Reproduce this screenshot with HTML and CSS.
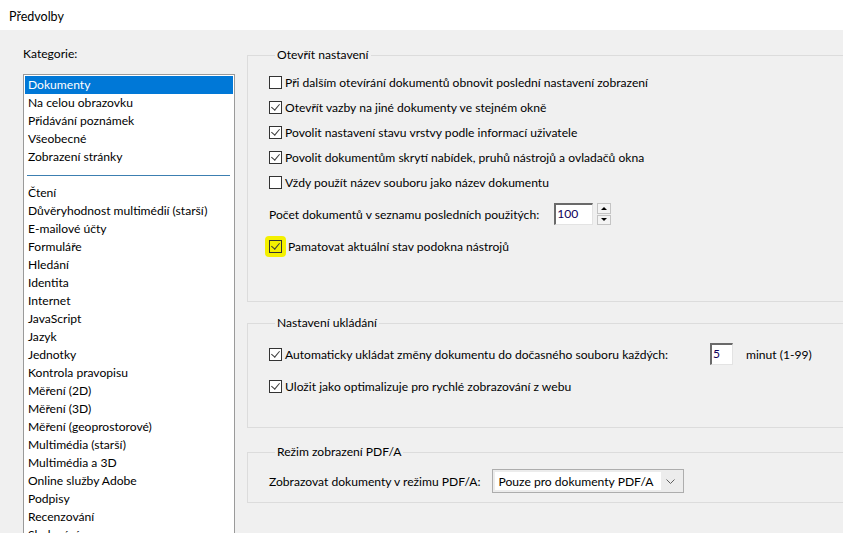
FILE: index.html
```html
<!DOCTYPE html>
<html lang="cs">
<head>
    <meta charset="UTF-8">
    <title>Předvolby</title>
    <link rel="stylesheet" href="styles.css">
</head>
<body>
    <div class="titlebar">Předvolby</div>

    <div class="dialog">
        <div class="sidebar">
            <div class="sidebar-label">Kategorie:</div>
            <ul class="listbox">
                <li class="selected">Dokumenty</li>
                <li>Na celou obrazovku</li>
                <li>Přidávání poznámek</li>
                <li>Všeobecné</li>
                <li>Zobrazení stránky</li>
                <li class="separator"></li>
                <li>Čtení</li>
                <li>Důvěryhodnost multimédií (starší)</li>
                <li>E-mailové účty</li>
                <li>Formuláře</li>
                <li>Hledání</li>
                <li>Identita</li>
                <li>Internet</li>
                <li>JavaScript</li>
                <li>Jazyk</li>
                <li>Jednotky</li>
                <li>Kontrola pravopisu</li>
                <li>Měření (2D)</li>
                <li>Měření (3D)</li>
                <li>Měření (geoprostorové)</li>
                <li>Multimédia (starší)</li>
                <li>Multimédia a 3D</li>
                <li>Online služby Adobe</li>
                <li>Podpisy</li>
                <li>Recenzování</li>
                <li>Sledování</li>
            </ul>
        </div>

        <div class="panel">
            <fieldset class="group group-open">
                <legend>Otevřít nastavení</legend>
                <div class="check-row"><span class="cb"></span><span class="cb-text">Při dalším otevírání dokumentů obnovit poslední nastavení zobrazení</span></div>
                <div class="check-row"><span class="cb checked"></span><span class="cb-text">Otevřít vazby na jiné dokumenty ve stejném okně</span></div>
                <div class="check-row"><span class="cb checked"></span><span class="cb-text">Povolit nastavení stavu vrstvy podle informací uživatele</span></div>
                <div class="check-row"><span class="cb checked"></span><span class="cb-text">Povolit dokumentům skrytí nabídek, pruhů nástrojů a ovladačů okna</span></div>
                <div class="check-row"><span class="cb"></span><span class="cb-text">Vždy použít název souboru jako název dokumentu</span></div>

                <div class="field-row recent-row">
                    <span class="field-label">Počet dokumentů v seznamu posledních použitých:</span>
                    <span class="textbox recent-box">100</span>
                    <span class="spin">
                        <span class="spin-btn"><span class="arrow-up"></span></span>
                        <span class="spin-btn"><span class="arrow-down"></span></span>
                    </span>
                </div>

                <div class="check-row highlight-row">
                    <span class="highlight"><span class="cb checked"></span></span>
                    <span class="cb-text">Pamatovat aktuální stav podokna nástrojů</span>
                </div>
            </fieldset>

            <fieldset class="group group-save">
                <legend>Nastavení ukládání</legend>
                <div class="check-row save-row">
                    <span class="cb checked"></span>
                    <span class="cb-text autosave-text">Automaticky ukládat změny dokumentu do dočasného souboru každých:</span>
                    <span class="textbox minutes-box">5</span>
                    <span class="unit">minut (1-99)</span>
                </div>
                <div class="check-row save-row">
                    <span class="cb checked"></span>
                    <span class="cb-text">Uložit jako optimalizuje pro rychlé zobrazování z webu</span>
                </div>
            </fieldset>

            <fieldset class="group group-pdfa">
                <legend>Režim zobrazení PDF/A</legend>
                <div class="field-row">
                    <span class="field-label">Zobrazovat dokumenty v režimu PDF/A:</span>
                    <span class="combo">
                        <span class="combo-value">Pouze pro dokumenty PDF/A</span>
                        <span class="combo-arrow">
                            <svg width="9" height="5" viewBox="0 0 9 5"><path d="M0.5 0.5 L4.5 4.5 L8.5 0.5" fill="none" stroke="#606060" stroke-width="1"/></svg>
                        </span>
                    </span>
                </div>
            </fieldset>
        </div>
    </div>
</body>
</html>
```

FILE: styles.css
```css
html, body {
    margin: 0;
    padding: 0;
}
body {
    width: 843px;
    height: 533px;
    overflow: hidden;
    font-family: 'Lato', 'Noto Sans', sans-serif;
    font-size: 12.1px;
    color: #000;
    background-color: #f0f0f0;
}
.titlebar {
    height: 30px;
    line-height: 34px;
    padding-left: 9px;
    background-color: #fff;
    box-sizing: border-box;
    font-size: 12.5px;
}
.dialog {
    display: flex;
    height: 503px;
}

/* left column */
.sidebar {
    width: 247px;
    flex-shrink: 0;
    padding-left: 23px;
    box-sizing: border-box;
}
.sidebar-label {
    margin-top: 16px;
    line-height: 16px;
}
.listbox {
    list-style: none;
    margin: 12px 0 0 0;
    padding: 1px;
    width: 212px;
    height: 470px;
    box-sizing: border-box;
    border: 1px solid #9a9a9a;
    background-color: #fff;
    overflow: hidden;
}
.listbox li {
    height: 18px;
    line-height: 18px;
    padding-left: 3px;
    white-space: nowrap;
}
.listbox li.selected {
    background-color: #0078d7;
    color: #fff;
}
.listbox li.separator {
    box-sizing: border-box;
    padding: 9px 3px 0 2px;
}
.listbox li.separator::after {
    content: "";
    display: block;
    border-top: 1px solid #3c7fb1;
}

/* right column */
.panel {
    flex: 1;
    padding-top: 17px;
}
.group {
    margin: 0 -20px 0 0;
    padding: 0 0 0 21px;
    border: 1px solid #dcdcdc;
    box-sizing: border-box;
}
.group legend {
    padding: 0 2px;
    margin-left: 6px;
    line-height: 16px;
}
.group-open {
    height: 255px;
    padding-top: 7px;
}
.group-save {
    margin-top: 13px;
    height: 113px;
    padding-top: 12px;
}
.group-pdfa {
    margin-top: 16px;
    height: 59px;
    padding-top: 9px;
}

.check-row {
    display: flex;
    align-items: center;
    height: 25px;
    white-space: nowrap;
}
.cb {
    width: 13px;
    height: 13px;
    box-sizing: border-box;
    border: 1px solid #333;
    background-color: #fff;
    flex-shrink: 0;
    position: relative;
}
.cb.checked::after {
    content: "";
    position: absolute;
    left: 3px;
    top: 0px;
    width: 4px;
    height: 7px;
    border-right: 1px solid #3a3a3a;
    border-bottom: 1px solid #3a3a3a;
    transform: rotate(40deg);
}
.cb-text {
    margin-left: 3px;
}

.field-row {
    display: flex;
    align-items: center;
    white-space: nowrap;
}
.recent-row {
    margin-top: 8px;
    height: 22px;
}
.textbox {
    height: 22px;
    box-sizing: border-box;
    background-color: #fff;
    border-top: 2px solid #6a6a6a;
    border-left: 2px solid #6a6a6a;
    border-right: 1px solid #e3e3e3;
    border-bottom: 1px solid #e3e3e3;
    line-height: 18px;
    padding-left: 1px;
    color: #10005a;
}
.recent-box {
    width: 39px;
    margin-left: 15px;
}
.spin {
    display: flex;
    flex-direction: column;
    margin-left: 4px;
    height: 22px;
    gap: 1px;
}
.spin-btn {
    width: 14px;
    flex: 1;
    box-sizing: border-box;
    border: 1px solid #c4c4c4;
    background-color: #f4f4f4;
    display: flex;
    align-items: center;
    justify-content: center;
}
.arrow-up {
    border-left: 3px solid transparent;
    border-right: 3px solid transparent;
    border-bottom: 3px solid #000;
}
.arrow-down {
    border-left: 3px solid transparent;
    border-right: 3px solid transparent;
    border-top: 3px solid #000;
}

.highlight-row {
    margin-top: 11px;
    height: 21px;
}
.highlight {
    margin-left: -4px;
    width: 21px;
    height: 21px;
    border-radius: 4px;
    background-color: #f4f000;
    display: flex;
    align-items: center;
    justify-content: center;
}
.highlight .cb {
    background-color: #f4f000;
}
.highlight-row .cb-text {
    margin-left: 2px;
}

.save-row {
    height: 22px;
}
.save-row + .save-row {
    margin-top: 10px;
}
.autosave-text {
    width: 425px;
    flex-shrink: 0;
}
.minutes-box {
    width: 23px;
}
.unit {
    margin-left: 13px;
}

.combo {
    display: flex;
    align-items: stretch;
    margin-left: 11px;
    width: 192px;
    height: 24px;
    box-sizing: border-box;
    border: 1px solid #adadad;
    background-color: #ececec;
    padding: 2px;
}
.combo-value {
    flex: 1;
    background-color: #fff;
    line-height: 20px;
    padding-left: 4px;
}
.combo-arrow {
    width: 20px;
    display: flex;
    align-items: center;
    justify-content: center;
}
```
